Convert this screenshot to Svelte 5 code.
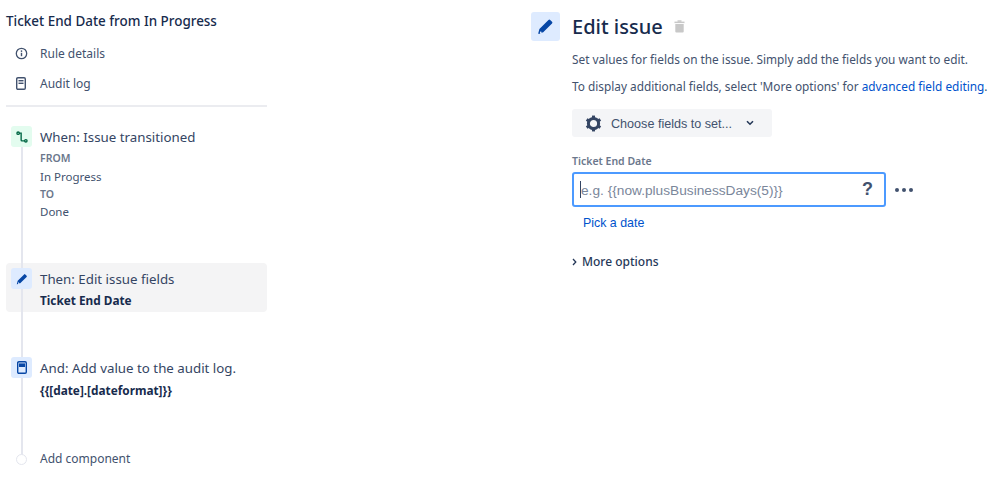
<script>
  const nav = [
    { label: 'Rule details', icon: 'info' },
    { label: 'Audit log', icon: 'log' }
  ]
  const pencil = 'M0.8 11.2l.9-3.4L8.1 1.4q.6-.6 1.2 0l1.3 1.3q.6.6 0 1.2L4.2 10.3l-1.2-.1-.1-1.1-.9.9.3 1.1z'
</script>

<div class="page">
  <aside class="sidebar">
    <h2>Ticket End Date from In Progress</h2>
    {#each nav as item}
      <div class="nav-item">
        <span class="nav-icon">
          {#if item.icon === 'info'}
            <svg width="13" height="13" viewBox="0 0 13 13"><circle cx="6.5" cy="6.5" r="5.2" fill="none" stroke="#42526e" stroke-width="1.3" /><rect x="5.8" y="5.8" width="1.4" height="3.4" fill="#42526e" /><circle cx="6.5" cy="4.1" r=".85" fill="#42526e" /></svg>
          {:else}
            <svg width="10" height="13" viewBox="0 0 10 13"><rect x=".7" y=".7" width="8.6" height="11.6" rx="1.2" fill="none" stroke="#42526e" stroke-width="1.4" /><rect x="2.5" y="3" width="5" height="1.4" fill="#42526e" /><rect x="2.5" y="5.6" width="5" height="1.4" fill="#42526e" /></svg>
          {/if}
        </span>
        {item.label}
      </div>
    {/each}
    <hr />

    <div class="flow">
      <div class="line"></div>

      <div class="step first">
        <span class="badge green">
          <svg width="12" height="12" viewBox="0 0 14 14" fill="none" stroke="#006644" stroke-width="1.6"><circle cx="2.5" cy="2.5" r="1.4" /><circle cx="11.5" cy="11.5" r="1.4" /><path d="M3.8 2.5H6v8q0 1 1 1h3.2" /></svg>
        </span>
        <div class="body">
          <div class="title">When: Issue transitioned</div>
          <div class="sub">FROM</div>
          <div class="val">In Progress</div>
          <div class="sub">TO</div>
          <div class="val">Done</div>
        </div>
      </div>

      <div class="step selected">
        <span class="badge blue">
          <svg width="12" height="12" viewBox="0 0 12 12"><path d={pencil} fill="#0747a6" /></svg>
        </span>
        <div class="body">
          <div class="title tight">Then: Edit issue fields</div>
          <div class="strong">Ticket End Date</div>
        </div>
      </div>

      <div class="step third">
        <span class="badge blue">
          <svg width="10" height="13" viewBox="0 0 10 13"><rect x=".7" y=".7" width="8.6" height="11.6" rx="1.2" fill="none" stroke="#0747a6" stroke-width="1.4" /><rect x="2" y="2.4" width="6" height="3.6" fill="#0747a6" /></svg>
        </span>
        <div class="body">
          <div class="title">And: Add value to the audit log.</div>
          <div class="strong gap">{'{{[date].[dateformat]}}'}</div>
        </div>
      </div>

      <div class="step add">
        <span class="dot-wrap"><span class="dot"></span></span>
        <div class="add-label">Add component</div>
      </div>
    </div>
  </aside>

  <main class="panel">
    <div class="heading">
      <span class="big-badge">
        <svg width="17" height="17" viewBox="0 0 12 12"><path d={pencil} fill="#0747a6" /></svg>
      </span>
      <h1>Edit issue</h1>
      <svg class="trash" width="11" height="13" viewBox="0 0 11 13"><rect x="0.5" y="1.6" width="10" height="1.5" fill="#c8c8c8" /><rect x="3.5" y="0.3" width="4" height="1.5" fill="#c8c8c8" /><path d="M1.3 4h8.4v7.6q0 1-1 1H2.3q-1 0-1-1z" fill="#c8c8c8" /></svg>
    </div>
    <div class="content">
      <p class="desc one">Set values for fields on the issue. Simply add the fields you want to edit.</p>
      <p class="desc two">To display additional fields, select 'More options' for <span class="link">advanced field editing</span>.</p>

      <div class="choose">
        <svg width="17" height="17" viewBox="0 0 18 18"><path d="M9 3.6a5.4 5.4 0 1 0 0 10.8A5.4 5.4 0 0 0 9 3.6z" fill="none" stroke="#344563" stroke-width="3.2" /><g fill="#344563"><rect x="7.4" y="0.6" width="3.2" height="3" /><rect x="7.4" y="14.4" width="3.2" height="3" /><rect x="7.4" y="0.6" width="3.2" height="3" transform="rotate(60 9 9)" /><rect x="7.4" y="0.6" width="3.2" height="3" transform="rotate(120 9 9)" /><rect x="7.4" y="0.6" width="3.2" height="3" transform="rotate(240 9 9)" /><rect x="7.4" y="0.6" width="3.2" height="3" transform="rotate(300 9 9)" /></g></svg>
        <span class="choose-text">Choose fields to set...</span>
        <svg class="chev" width="8" height="6" viewBox="0 0 8 6"><path d="M1 1.2l3 3 3-3" fill="none" stroke="#253858" stroke-width="1.6" /></svg>
      </div>

      <div class="field-label">Ticket End Date</div>
      <div class="field-row">
        <div class="input">
          <span class="caret"></span>
          <span class="placeholder">e.g. {'{{now.plusBusinessDays(5)}}'}</span>
          <span class="help">?</span>
        </div>
        <div class="dots"><i></i><i></i><i></i></div>
      </div>
      <div class="pick">Pick a date</div>

      <div class="more">
        <svg width="5" height="8" viewBox="0 0 5 8"><path d="M1 1l2.8 3L1 7" fill="none" stroke="#253858" stroke-width="1.3" /></svg>
        More options
      </div>
    </div>
  </main>
</div>

<style>
  :global(body) {
    background: #fff;
  }
  .page {
    display: flex;
    width: 999px;
    height: 486px;
    overflow: hidden;
    font-family: 'Noto Sans', sans-serif;
    color: #253858;
  }
  .sidebar {
    width: 261px;
    margin-left: 6px;
    flex: none;
  }
  h2 {
    margin: 0;
    padding-top: 11px;
    height: 21px;
    font-size: 13.45px;
    line-height: 20px;
    font-weight: 500;
    color: #172b4d;
  }
  .nav-item {
    display: flex;
    align-items: center;
    height: 30px;
    font-size: 12px;
    color: #42526e;
  }
  .nav-item:first-of-type {
    margin-top: 6px;
  }
  .nav-icon {
    width: 34px;
    display: flex;
    justify-content: center;
    padding-right: 4px;
    box-sizing: border-box;
  }
  hr {
    border: 0;
    height: 2px;
    background: #ebecf0;
    margin: 7px 0 0;
  }
  .flow {
    position: relative;
  }
  .line {
    position: absolute;
    left: 14.5px;
    top: 20px;
    height: 316px;
    width: 2px;
    background: #e4e6ee;
  }
  .step {
    display: flex;
    padding-left: 5px;
  }
  .step.first {
    margin-top: 19px;
  }
  .step.selected {
    margin-top: 42px;
    background: #f4f4f5;
    border-radius: 4px;
    height: 49px;
    padding-top: 5px;
    box-sizing: border-box;
  }
  .step.third {
    margin-top: 45px;
  }
  .step.add {
    margin-top: 51px;
    align-items: center;
  }
  .badge {
    position: relative;
    flex: none;
    width: 21px;
    height: 21px;
    border-radius: 3px;
    display: flex;
    align-items: center;
    justify-content: center;
    margin-right: 8px;
  }
  .green {
    background: #e3fcef;
  }
  .blue {
    background: #deebff;
  }
  .body {
    position: relative;
  }
  .title {
    font-size: 13.3px;
    line-height: 23px;
    margin-bottom: 1px;
    color: #344563;
  }
  .title.tight {
    margin-bottom: 0;
  }
  .sub {
    font-size: 10.5px;
    line-height: 17.5px;
    font-weight: 600;
    color: #6b778c;
  }
  .val {
    font-size: 11.5px;
    line-height: 18px;
    color: #42526e;
  }
  .strong {
    font-size: 11.8px;
    line-height: 18px;
    font-weight: 700;
    color: #172b4d;
  }
  .strong.gap {
    margin-top: 1px;
  }
  .dot-wrap {
    position: relative;
    width: 21px;
    display: flex;
    justify-content: center;
    margin-right: 8px;
  }
  .dot {
    width: 9px;
    height: 9px;
    border: 1px solid #e4e6ee;
    border-radius: 50%;
    background: #fff;
  }
  .add-label {
    font-size: 12px;
    line-height: 18px;
    color: #42526e;
  }
  .panel {
    margin-left: 264px;
    width: 468px;
    flex: none;
  }
  .heading {
    display: flex;
    align-items: center;
    margin-top: 12px;
    height: 29px;
  }
  .big-badge {
    width: 29px;
    height: 29px;
    background: #deebff;
    border-radius: 3px;
    display: flex;
    align-items: center;
    justify-content: center;
    margin-right: 12px;
  }
  h1 {
    margin: 0;
    font-size: 20px;
    font-weight: 500;
    color: #172b4d;
  }
  .trash {
    margin-left: 11px;
  }
  .content {
    margin-left: 41px;
  }
  .desc {
    margin: 0;
    font-size: 11.84px;
    line-height: 16px;
    color: #42526e;
    white-space: nowrap;
  }
  .desc.one {
    margin-top: 10px;
  }
  .desc.two {
    margin-top: 11px;
  }
  .link {
    color: #0052cc;
  }
  .choose {
    display: flex;
    align-items: center;
    width: 200px;
    height: 28px;
    margin-top: 15px;
    background: #f4f5f7;
    border-radius: 3px;
    padding-left: 13px;
    box-sizing: border-box;
  }
  .choose-text {
    font-family: 'Liberation Sans', sans-serif;
    font-size: 12.6px;
    color: #42526e;
    margin-left: 9px;
    padding-top: 1px;
  }
  .chev {
    margin-left: 14px;
  }
  .field-label {
    margin-top: 17px;
    font-size: 10.5px;
    line-height: 14px;
    font-weight: 600;
    color: #6b778c;
  }
  .field-row {
    display: flex;
    align-items: center;
    margin-top: 4px;
  }
  .input {
    display: flex;
    align-items: center;
    width: 314px;
    height: 35px;
    box-sizing: border-box;
    border: 2px solid #4c9aff;
    border-radius: 3px;
    padding-left: 6px;
  }
  .caret {
    width: 1px;
    height: 17px;
    background: #344563;
  }
  .placeholder {
    font-family: 'Liberation Sans', sans-serif;
    font-size: 13.7px;
    padding-top: 1px;
    color: #7a869a;
  }
  .help {
    margin-left: auto;
    margin-right: 11px;
    font-family: 'Liberation Sans', sans-serif;
    font-weight: 700;
    font-size: 18px;
    color: #42526e;
  }
  .dots {
    display: flex;
    gap: 3px;
    margin-left: 9px;
  }
  .dots i {
    width: 4px;
    height: 4px;
    border-radius: 50%;
    background: #42526e;
  }
  .pick {
    margin: 8px 0 0 11px;
    font-family: 'Liberation Sans', sans-serif;
    font-size: 12.4px;
    line-height: 16px;
    color: #0052cc;
  }
  .more {
    display: flex;
    align-items: center;
    gap: 5px;
    margin-top: 23px;
    font-size: 12px;
    line-height: 16px;
    font-weight: 500;
    color: #253858;
  }
</style>
